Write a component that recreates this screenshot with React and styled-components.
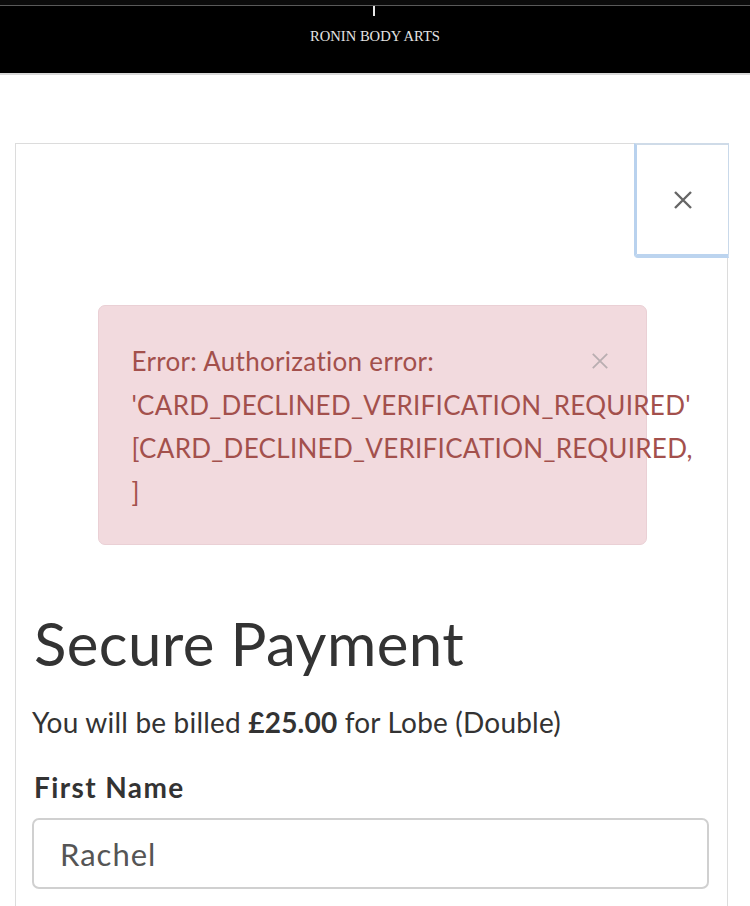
import React from "react";
import styled, { createGlobalStyle } from "styled-components";

const Global = createGlobalStyle`
  html, body { margin: 0; padding: 0; background: #fff; }
  body { font-family: Lato, "Open Sans", sans-serif; color: #333; overflow: hidden; }
  * { box-sizing: border-box; }
`;

const Header = styled.header`
  height: 75px;
  background: #000;
  border-top: 5px solid #0b0b0b;
  border-bottom: 2px solid #d8d8d8;
  display: flex;
  flex-direction: column;
  align-items: center;
`;

const TopLine = styled.div`
  align-self: stretch;
  height: 1px;
  background: #5a5a5a;
`;

const Tick = styled.div`
  width: 2px;
  height: 10px;
  background: #e8e8e8;
  margin-left: -3px;
`;

const Brand = styled.div`
  margin-top: 12px;
  font-family: "Liberation Serif", "DejaVu Serif", serif;
  font-size: 14.6px;
  color: #e4e4e4;
  text-transform: uppercase;
`;

const Main = styled.main`
  padding: 68px 22px 0 15px;
`;

const Card = styled.section`
  border: 1px solid #dcdcdc;
  border-bottom: none;
  height: 900px;
  display: flex;
  flex-direction: column;
`;

const CardTop = styled.div`
  display: flex;
  justify-content: flex-end;
  margin-top: -1px;
  margin-right: -2px;
`;

const CloseButton = styled.button`
  width: 95px;
  height: 115px;
  background: #fff;
  border: 1px solid #c9d9ea;
  border-left: 3px solid #b9d2ee;
  border-bottom: 4px solid #bcd4ef;
  border-top: 2px solid #cfdbe8;
  border-radius: 0 0 0 4px;
  display: flex;
  align-items: center;
  justify-content: center;
  padding: 0;
  cursor: pointer;
`;

const Alert = styled.div`
  align-self: center;
  width: 549px;
  margin-top: 47px;
  margin-left: 1px;
  background: #f2dade;
  border: 1px solid #ead0d5;
  border-radius: 7px;
  padding: 34px 0 30px 33px;
  position: relative;
  color: #a3504c;
  font-size: 26px;
  letter-spacing: 0.3px;
  line-height: 43.5px;
  white-space: nowrap;
`;

const AlertClose = styled.span`
  position: absolute;
  top: 46px;
  right: 37px;
  display: flex;
`;

const Body = styled.div`
  padding: 0 0 0 18px;
  margin-top: 62px;
`;

const Title = styled.h1`
  margin: 0;
  font-weight: 400;
  font-size: 60px;
  line-height: 72px;
  color: #333;
  letter-spacing: 0.4px;
`;

const Billed = styled.p`
  margin: 25px 0 0 -2px;
  font-size: 28px;
  line-height: 36px;
  color: #333;
  letter-spacing: 0.2px;
  strong { font-weight: 700; }
`;

const Label = styled.label`
  display: block;
  margin: 29px 0 0;
  font-size: 28px;
  line-height: 36px;
  font-weight: 700;
  color: #333;
  letter-spacing: 1.4px;
`;

const Input = styled.div`
  margin: 13px 0 0 -2px;
  width: 677px;
  height: 71px;
  border: 2px solid #d0d0d0;
  border-radius: 7px;
  padding: 0 26px;
  display: flex;
  align-items: center;
  font-size: 31px;
  color: #555;
  letter-spacing: 1px;
`;

const X = ({ size, color, width }) => (
  <svg width={size} height={size} viewBox="0 0 20 20">
    <path d="M2 2L18 18M18 2L2 18" stroke={color} strokeWidth={width} strokeLinecap="butt" />
  </svg>
);

export default function App() {
  return (
    <>
      <Global />
      <Header>
        <TopLine />
        <Tick />
        <Brand>Ronin Body Arts</Brand>
      </Header>
      <Main>
        <Card>
          <CardTop>
            <CloseButton aria-label="Close">
              <X size={20} color="#666" width={2.4} />
            </CloseButton>
          </CardTop>
          <Alert>
            <AlertClose><X size={18} color="#b9aeb1" width={2} /></AlertClose>
            <div>Error: Authorization error:</div>
            <div>'CARD_DECLINED_VERIFICATION_REQUIRED'</div>
            <div>[CARD_DECLINED_VERIFICATION_REQUIRED,</div>
            <div>]</div>
          </Alert>
          <Body>
            <Title>Secure Payment</Title>
            <Billed>You will be billed <strong>£25.00</strong> for Lobe (Double)</Billed>
            <Label>First Name</Label>
            <Input>Rachel</Input>
          </Body>
        </Card>
      </Main>
    </>
  );
}
